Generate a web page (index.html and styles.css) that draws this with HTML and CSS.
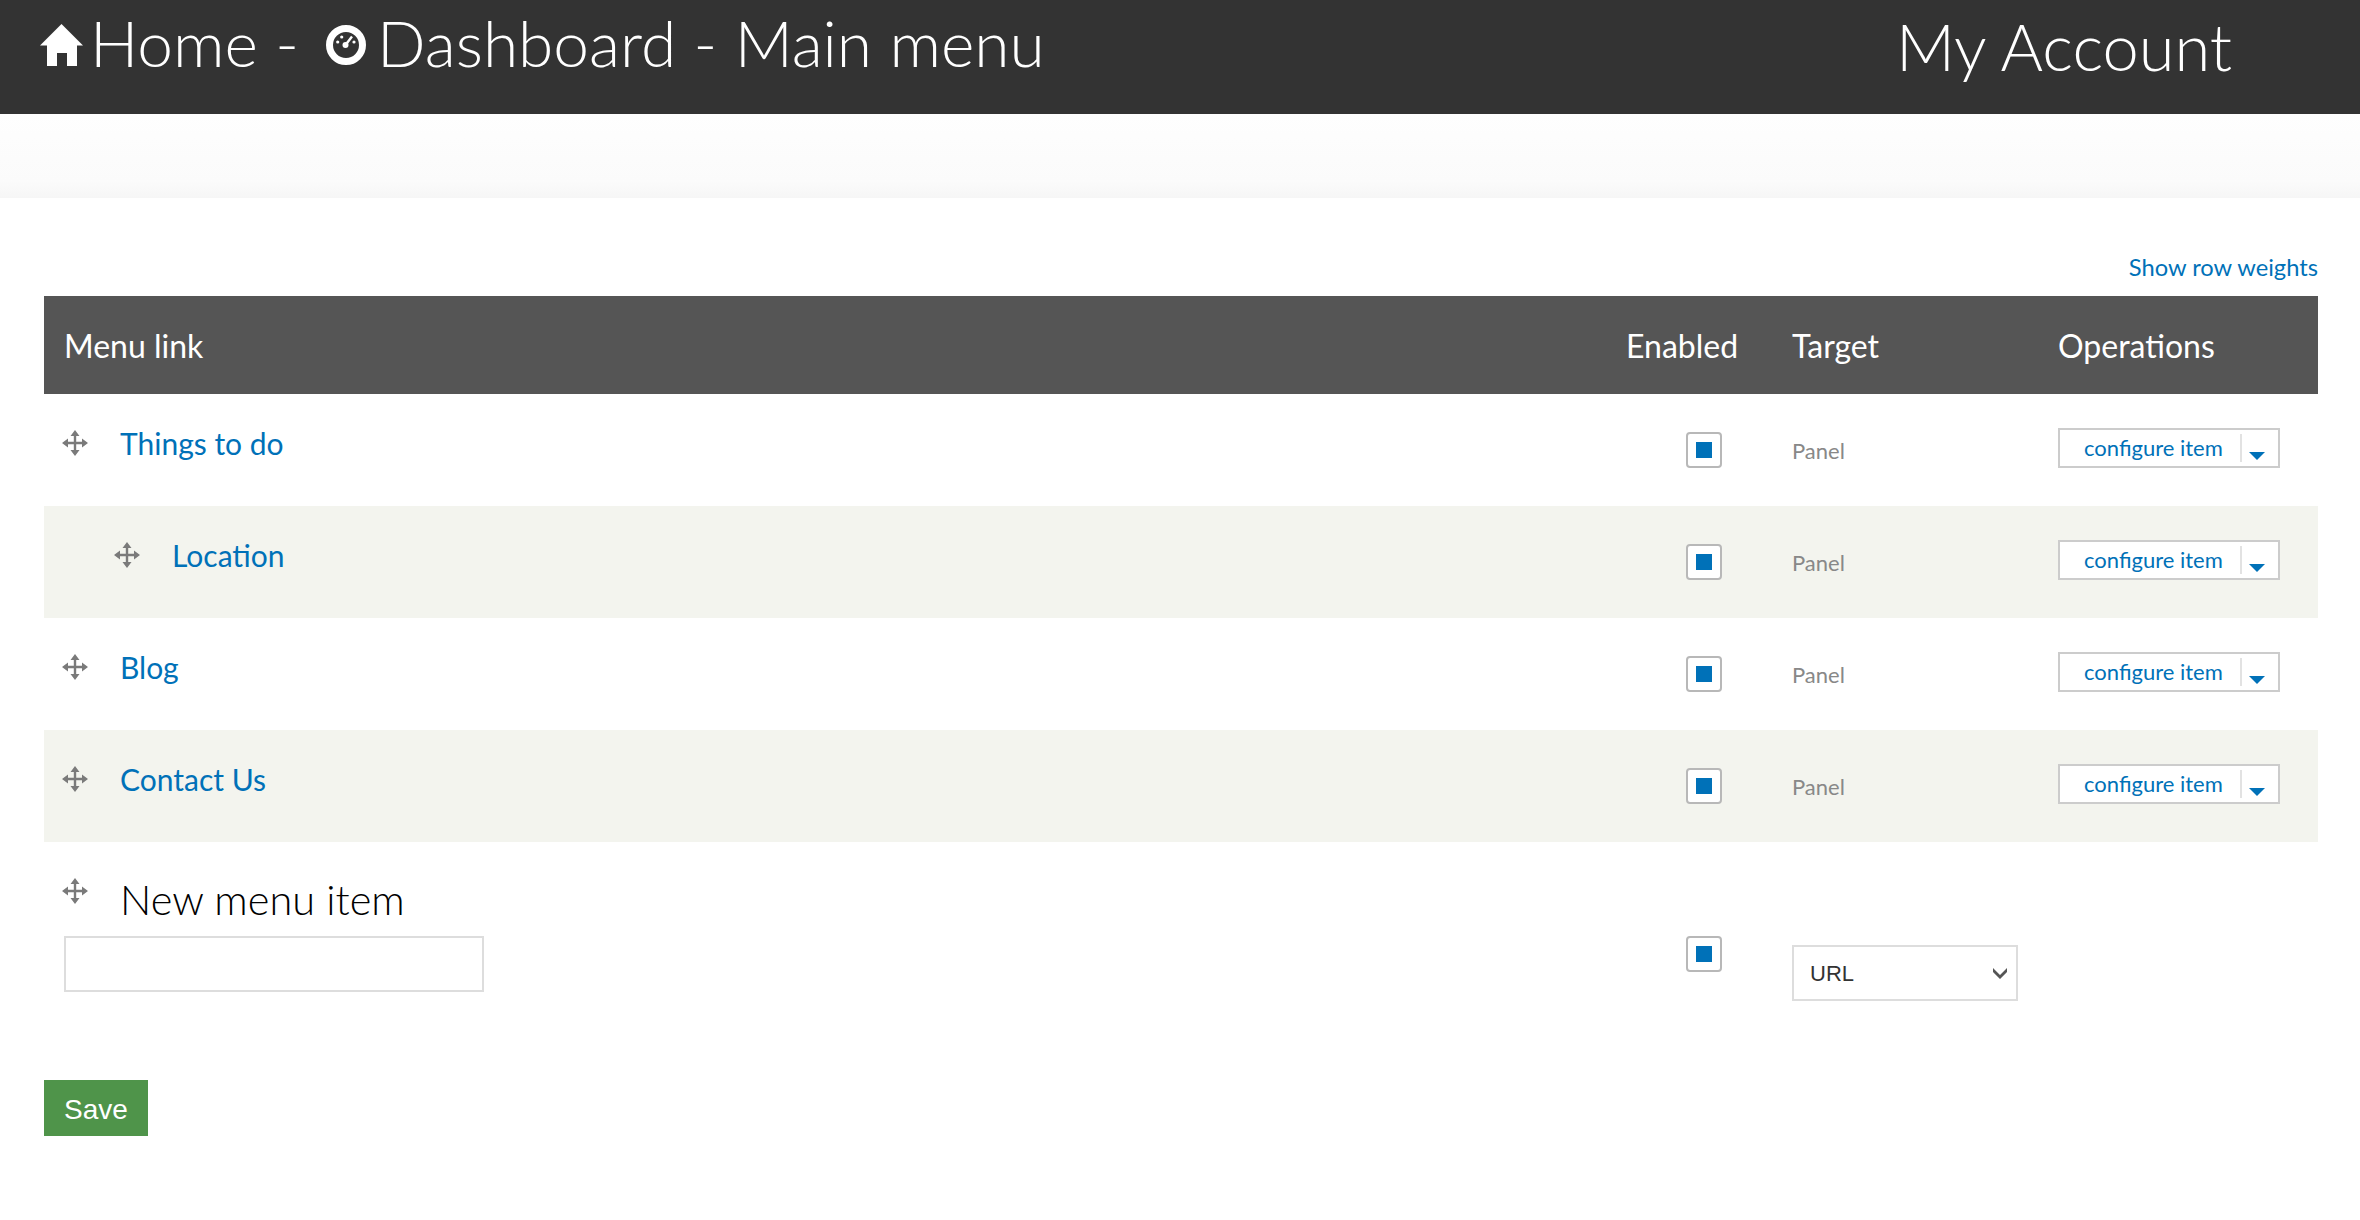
FILE: index.html
```html
<!DOCTYPE html>
<html lang="en">
<head>
    <meta charset="UTF-8">
    <meta name="viewport" content="width=device-width, initial-scale=1.0">
    <title>Main menu</title>
    <link rel="stylesheet" href="styles.css">
</head>
<body>
    <svg class="sprites" width="0" height="0" aria-hidden="true">
        <symbol id="move" viewBox="0 0 26 26">
            <path d="M13 0l4.500 6H14.200v5.800H20V8.500l6 4.500-6 4.500V14.200h-5.800V20h3.300L13 26l-4.500-6h3.300v-5.800H6v3.300L0 13l6-4.500v3.300h5.800V6H8.500z" fill="#7a7a7a"/>
        </symbol>
    </svg>

    <header class="topbar">
        <h1 class="crumbs">
            <svg class="icon-home" viewBox="0 0 43 42"><path d="M21.500 0L43 21.500H37V42H27V29H17V42H7V21.500H0z" fill="#fff"/></svg>
            <span class="crumb-text crumb-home">Home -</span>
            <svg class="icon-dash" viewBox="0 0 40 40">
                <circle cx="20" cy="20" r="16.500" fill="none" stroke="#fff" stroke-width="7"/>
                <circle cx="19.500" cy="20" r="3" fill="#fff"/>
                <path d="M19.500 20L26 11.500" stroke="#fff" stroke-width="2.400"/>
                <circle cx="11.700" cy="17" r="1.600" fill="#fff"/>
                <circle cx="15.700" cy="12" r="1.600" fill="#fff"/>
                <circle cx="28" cy="17" r="1.600" fill="#fff"/>
            </svg>
            <span class="crumb-text">Dashboard - Main menu</span>
        </h1>
        <a class="account" href="#">My Account</a>
    </header>

    <div class="subbar"></div>

    <main class="content">
        <div class="weights"><a href="#">Show row weights</a></div>

        <form>
            <table class="menu-table">
                <thead>
                    <tr>
                        <th class="col-link">Menu link</th>
                        <th class="col-enabled">Enabled</th>
                        <th class="col-target">Target</th>
                        <th class="col-ops">Operations</th>
                    </tr>
                </thead>
                <tbody>
                    <tr>
                        <td class="cell-link"><div class="link-row"><svg class="handle"><use href="#move"/></svg><a href="#">Things to do</a></div></td>
                        <td class="cell-check"><span class="check"></span></td>
                        <td class="cell-target">Panel</td>
                        <td><div class="dropbutton"><a href="#">configure item</a><span class="toggle"></span></div></td>
                    </tr>
                    <tr class="even">
                        <td class="cell-link"><div class="link-row nested"><svg class="handle"><use href="#move"/></svg><a href="#">Location</a></div></td>
                        <td class="cell-check"><span class="check"></span></td>
                        <td class="cell-target">Panel</td>
                        <td><div class="dropbutton"><a href="#">configure item</a><span class="toggle"></span></div></td>
                    </tr>
                    <tr>
                        <td class="cell-link"><div class="link-row"><svg class="handle"><use href="#move"/></svg><a href="#">Blog</a></div></td>
                        <td class="cell-check"><span class="check"></span></td>
                        <td class="cell-target">Panel</td>
                        <td><div class="dropbutton"><a href="#">configure item</a><span class="toggle"></span></div></td>
                    </tr>
                    <tr class="even">
                        <td class="cell-link"><div class="link-row"><svg class="handle"><use href="#move"/></svg><a href="#">Contact Us</a></div></td>
                        <td class="cell-check"><span class="check"></span></td>
                        <td class="cell-target">Panel</td>
                        <td><div class="dropbutton"><a href="#">configure item</a><span class="toggle"></span></div></td>
                    </tr>
                    <tr class="new-row">
                        <td class="cell-new">
                            <div class="new-title"><svg class="handle"><use href="#move"/></svg><span class="new-label">New menu item</span></div>
                            <input class="new-input" type="text">
                        </td>
                        <td class="cell-check"><span class="check check-new"></span></td>
                        <td>
                            <select class="target-select">
                                <option>URL</option>
                            </select>
                        </td>
                        <td></td>
                    </tr>
                </tbody>
            </table>

            <button class="save" type="submit">Save</button>
        </form>
    </main>
</body>
</html>
```

FILE: styles.css
```css
* {
    box-sizing: border-box;
}

body {
    margin: 0;
    font-family: Lato, "Open Sans", sans-serif;
    background-color: #fff;
    color: #333;
}

a {
    color: #0071b8;
    text-decoration: none;
}

.sprites {
    position: absolute;
}

.topbar {
    display: flex;
    justify-content: space-between;
    height: 114px;
    background-color: #333;
    color: #fff;
}

.crumbs {
    display: flex;
    align-items: center;
    height: 90px;
    margin: 0;
    padding-left: 40px;
    font-size: 64px;
    font-weight: 300;
    white-space: nowrap;
}

.crumb-text {
    margin-bottom: 5px;
}

.icon-home {
    width: 43px;
    height: 42px;
    margin-right: 7px;
}

.crumb-home {
    margin-right: 27px;
}

.icon-dash {
    width: 40px;
    height: 40px;
    margin-right: 11px;
}

.account {
    padding: 7px 128px 0 0;
    color: #fff;
    font-size: 65px;
    font-weight: 300;
}

.subbar {
    height: 84px;
    background: linear-gradient(#fefefe, #fbfbfb 80%, #f6f6f6);
}

.content {
    padding: 0 42px 0 44px;
}

.weights {
    padding-top: 55px;
    height: 98px;
    font-size: 23.700px;
    text-align: right;
}

.menu-table {
    width: 100%;
    border-collapse: collapse;
    table-layout: fixed;
}

.menu-table th {
    height: 98px;
    padding: 0 0 0 20px;
    background-color: #555;
    color: #fff;
    font-size: 32px;
    font-weight: 400;
    text-align: left;
}

.col-link {
    width: 1562px;
}

.col-enabled {
    width: 166px;
}

.col-target {
    width: 266px;
}

.menu-table td {
    height: 112px;
    padding: 0 0 0 20px;
    vertical-align: middle;
}

.even {
    background-color: #f3f4ee;
}

.link-row {
    display: flex;
    align-items: center;
    margin-top: -14px;
    font-size: 30px;
}

.link-row.nested {
    padding-left: 52px;
}

.handle {
    flex: none;
    width: 26px;
    height: 26px;
    margin: 0 32px 0 -2px;
    filter: blur(0.7px);
}

.check {
    display: block;
    position: relative;
    width: 36px;
    height: 36px;
    margin: 0 0 0 60px;
    border: 2px solid #b8b8b8;
    border-radius: 4px;
    background-color: #fff;
}

.check::after {
    content: "";
    position: absolute;
    top: 8px;
    left: 8px;
    width: 16px;
    height: 16px;
    background-color: #0071b8;
}

.check-new {
    margin-top: 18px;
}

.cell-target {
    color: #888;
    font-size: 22px;
}

.dropbutton {
    display: flex;
    align-items: center;
    width: 222px;
    height: 40px;
    margin-top: -4px;
    border: 2px solid #ccc;
    background-color: #fff;
    font-size: 22px;
}

.dropbutton a {
    width: 180px;
    padding: 0 0 1px 24px;
}

.toggle {
    position: relative;
    width: 1px;
    height: 28px;
    border-left: 2px solid #e2e2e2;
}

.toggle::after {
    content: "";
    position: absolute;
    top: 18px;
    left: 7px;
    border-style: solid;
    border-width: 8px 8px 0 8px;
    border-color: #0071b8 transparent transparent transparent;
}

.new-row td {
    height: 206px;
}

.menu-table .cell-new {
    padding-top: 36px;
    vertical-align: top;
}

.new-title {
    display: flex;
    align-items: flex-start;
    height: 58px;
    font-size: 41.500px;
    font-weight: 300;
    color: #000;
}

.new-label {
    margin-top: -4px;
}

.new-input {
    display: block;
    width: 420px;
    height: 56px;
    border: 2px solid #ddd;
    background-color: #fff;
}

.target-select {
    display: block;
    width: 226px;
    height: 56px;
    margin-top: 56px;
    padding-left: 16px;
    border: 2px solid #ddd;
    border-radius: 0;
    background: #fff url("data:image/svg+xml,%3Csvg xmlns='http://www.w3.org/2000/svg' width='14' height='12' viewBox='0 0 14 12'%3E%3Cpath d='M0 1l7 7 7-7v4l-7 7-7-7z' fill='%23555'/%3E%3C/svg%3E") no-repeat right 9px center;
    color: #333;
    font-family: "Liberation Sans", Arial, sans-serif;
    font-size: 22px;
    appearance: none;
}

.save {
    display: block;
    width: 104px;
    height: 56px;
    margin-top: 32px;
    padding: 3px 0 0;
    border: none;
    background-color: #4f944a;
    color: #fff;
    font-family: "Liberation Sans", Arial, sans-serif;
    font-size: 28px;
}
```
